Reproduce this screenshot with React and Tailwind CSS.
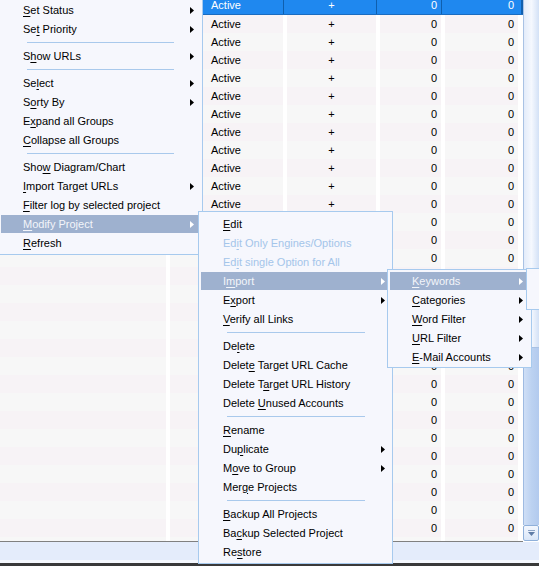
import React from "react";

const mainItems = [
  { label: "Set Status", u: 0, arrow: true },
  { label: "Set Priority", u: 2, arrow: true },
  { sep: true },
  { label: "Show URLs", u: 1, arrow: true },
  { sep: true },
  { label: "Select", u: 2, arrow: true },
  { label: "Sorty By", u: 1, arrow: true },
  { label: "Expand all Groups", u: 1 },
  { label: "Collapse all Groups", u: 0 },
  { sep: true },
  { label: "Show Diagram/Chart", u: 3 },
  { label: "Import Target URLs", u: 0, arrow: true },
  { label: "Filter log by selected project", u: 0 },
  { label: "Modify Project", u: 0, arrow: true, active: true },
  { label: "Refresh", u: 0 },
];

const modifyItems = [
  { label: "Edit", u: 0 },
  { label: "Edit Only Engines/Options", u: 2, disabled: true },
  { label: "Edit single Option for All", u: 2, disabled: true },
  { label: "Import", u: 1, arrow: true, active: true },
  { label: "Export", u: 1, arrow: true },
  { label: "Verify all Links", u: 0 },
  { sep: true },
  { label: "Delete", u: 2 },
  { label: "Delete Target URL Cache", u: 5 },
  { label: "Delete Target URL History", u: 8 },
  { label: "Delete Unused Accounts", u: 7 },
  { sep: true },
  { label: "Rename", u: 0 },
  { label: "Duplicate", u: 2, arrow: true },
  { label: "Move to Group", u: 1, arrow: true },
  { label: "Merge Projects", u: 3 },
  { sep: true },
  { label: "Backup All Projects", u: 0 },
  { label: "Backup Selected Project", u: 2 },
  { label: "Restore", u: 2 },
];

const importItems = [
  { label: "Keywords", u: 0, arrow: true, active: true },
  { label: "Categories", u: 0, arrow: true },
  { label: "Word Filter", u: 0, arrow: true },
  { label: "URL Filter", u: 0, arrow: true },
  { label: "E-Mail Accounts", u: 0, arrow: true },
];

function Arrow({ white }) {
  return (
    <svg width="4" height="7" viewBox="0 0 4 7" className={white ? "fill-white" : "fill-black"}>
      <path d="M0 0L4 3.5L0 7Z" />
    </svg>
  );
}

function Label({ label, u }) {
  if (u == null) return label;
  return (
    <>
      {label.slice(0, u)}
      <span className="underline underline-offset-[2px]">{label[u]}</span>
      {label.slice(u + 1)}
    </>
  );
}

function MenuItem({ item }) {
  if (item.sep) {
    return (
      <div className="h-[8px] pt-[3px] pl-[26px] pr-[24px]">
        <div className="h-px bg-[#a9c9ec]" />
      </div>
    );
  }
  const tone = item.active
    ? "bg-[#9eb1cf] text-[#f3f5fa]"
    : item.disabled
    ? "text-[#a4c5ea]"
    : "text-black";
  return (
    <div className="h-[19px]">
      <div className={`h-[18px] flex items-center pl-[22px] pr-[4px] ${tone}`}>
        <span className="flex-1 whitespace-nowrap leading-none">
          <Label label={item.label} u={item.u} />
        </span>
        {item.arrow && <Arrow white={item.active} />}
      </div>
    </div>
  );
}

function Row({ i }) {
  const sel = i === 0;
  const bg = sel ? "bg-[#1f88ef] text-white" : i % 2 ? "bg-[#f7f3f6] text-black" : "bg-[#f7f7f7] text-black";
  const gap = sel ? "bg-[#1f88ef] border-l border-[#0f5fae]" : "bg-white";
  return (
    <div className={`flex h-[18px] shrink-0 ${sel ? "border-b border-[#1a6cc0]" : ""}`}>
      <div className={`w-[166px] ${bg}`} />
      <div className={`w-[4px] ${gap}`} />
      <div className={`w-[29px] ${bg}`} />
      <div className={`w-[4px] ${gap}`} />
      <div className={`w-[80px] pl-[8px] flex items-center ${bg}`}>Active</div>
      <div className={`w-[4px] ${gap}`} />
      <div className={`w-[89px] flex items-center justify-center ${bg}`}>+</div>
      <div className={`w-[4px] ${gap}`} />
      <div className={`w-[61px] pr-[4px] flex items-center justify-end ${bg}`}>0</div>
      <div className={`w-[4px] ${gap}`} />
      <div className={`w-[73px] pr-[4px] flex items-center justify-end ${bg}`}>0</div>
      <div className={`w-[5px] ${sel ? "bg-[#1f88ef] border-r-2 border-[#0f5fae]" : "bg-white"}`} />
    </div>
  );
}

export default function App() {
  const rows = Array.from({ length: 31 }, (_, i) => i);
  return (
    <div className="relative w-[539px] h-[566px] overflow-hidden bg-white font-['Liberation_Sans',Arial,sans-serif] text-[11px]">
      <div className="flex h-[542px]">
        <div className="w-[523px] h-[542px] overflow-hidden border-b border-[#808080] flex flex-col">
          <div className="-mt-[3px] flex flex-col">
            {rows.map((i) => (
              <Row key={i} i={i} />
            ))}
          </div>
        </div>
        <div className="w-[16px] h-[542px] flex flex-col">
          <div className="h-[348px] border-l border-b border-[#a9c2e4] bg-gradient-to-r from-[#e3ecfa] via-[#f5f8fe] to-[#d3e1f6]" />
          <div className="flex-1 border-l border-[#9fbbe2] bg-gradient-to-r from-[#cfdff6] via-[#bcd2f1] to-[#b2caee]" />
          <div className="h-[16px] mb-px border border-[#8fb0da] rounded-[2px] bg-gradient-to-b from-[#f3f7fe] to-[#d9e6f8] flex flex-col items-center justify-center gap-px">
            <div className="w-[7px] h-px bg-[#8ca4c6]" />
            <svg width="7" height="4" viewBox="0 0 7 4" className="fill-[#5f7ca6]">
              <path d="M0 0H7L3.5 4Z" />
            </svg>
          </div>
        </div>
      </div>
      <div className="h-[18px] bg-[#e4ecfb]" />
      <div className="h-[3px] bg-[#f5f8fe]" />
      <div className="h-[3px] bg-[#3a3a3a]" />

      <div className="absolute left-0 top-0 w-[203px] pt-px pb-px pl-px pr-[4px] bg-[#f6f7fd] border-r border-b border-[#a7caee]">
        {mainItems.map((it, k) => (
          <MenuItem key={k} item={it} />
        ))}
      </div>

      <div className="absolute left-[198px] top-[211px] w-[195px] pt-[3px] pb-px pl-[2px] pr-[3px] bg-[#f6f7fd] border border-[#a7caee]">
        {modifyItems.map((it, k) => (
          <MenuItem key={k} item={it} />
        ))}
      </div>

      <div className="absolute left-[387px] top-[269px] w-[145px] pt-[2px] pl-[2px] pr-[4px] bg-[#f6f7fd] border border-[#a7caee]">
        {importItems.map((it, k) => (
          <MenuItem key={k} item={it} />
        ))}
      </div>

      <div className="absolute left-[526px] top-[268px] w-[20px] h-[42px] bg-[#f6f7fd] border border-[#a7caee]" />
    </div>
  );
}
